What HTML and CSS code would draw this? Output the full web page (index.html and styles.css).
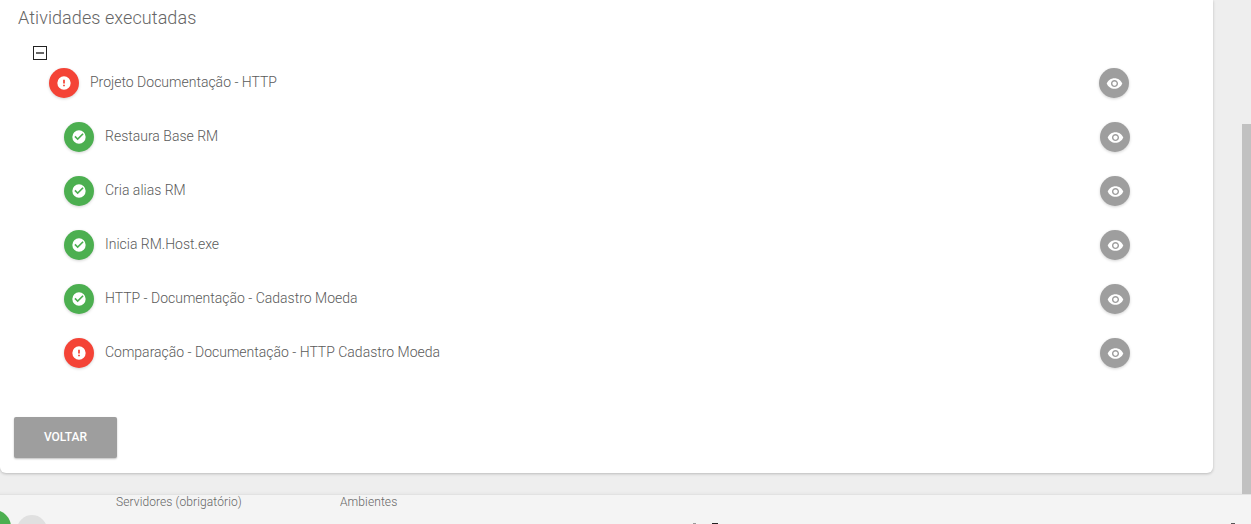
FILE: index.html
```html
<!DOCTYPE html>
<html lang="pt">
<head>
<meta charset="utf-8">
<title>Atividades executadas</title>
<link rel="stylesheet" href="styles.css">
</head>
<body>
<svg class="defs" width="0" height="0" aria-hidden="true">
  <symbol id="i-eye" viewBox="0 0 24 24"><path d="M12 4.5C7 4.5 2.7 7.6 1 12c1.7 4.4 6 7.5 11 7.5s9.3-3.1 11-7.5c-1.7-4.4-6-7.5-11-7.5zM12 17c-2.8 0-5-2.2-5-5s2.2-5 5-5 5 2.2 5 5-2.2 5-5 5zm0-8c-1.7 0-3 1.3-3 3s1.3 3 3 3 3-1.3 3-3-1.3-3-3-3z"/></symbol>
  <symbol id="i-check" viewBox="0 0 24 24"><path fill-rule="evenodd" d="M12 2a10 10 0 1 0 0 20 10 10 0 0 0 0-20zm-2 15-5-5 1.8-1.8 3.2 3.2 7.2-7.2L19 8l-9 9z"/></symbol>
  <symbol id="i-alert" viewBox="0 0 24 24"><path fill-rule="evenodd" d="M12 2a10 10 0 1 0 0 20 10 10 0 0 0 0-20zm1.3 15h-2.6v-2.4h2.6V17zm0-4.4h-2.6V7h2.6v5.6z"/></symbol>
</svg>
<div class="viewport">
  <main class="card">
    <h1 class="title">Atividades executadas</h1>
    <div class="tree">
      <span class="toggle"><span class="toggle-bar"></span></span>
      <div class="row row-root">
        <span class="status status-error"><svg><use href="#i-alert"/></svg></span>
        <span class="label">Projeto Documentação - HTTP</span>
        <span class="view"><svg><use href="#i-eye"/></svg></span>
      </div>
      <div class="row row-child">
        <span class="status status-ok"><svg><use href="#i-check"/></svg></span>
        <span class="label">Restaura Base RM</span>
        <span class="view"><svg><use href="#i-eye"/></svg></span>
      </div>
      <div class="row row-child">
        <span class="status status-ok"><svg><use href="#i-check"/></svg></span>
        <span class="label">Cria alias RM</span>
        <span class="view"><svg><use href="#i-eye"/></svg></span>
      </div>
      <div class="row row-child">
        <span class="status status-ok"><svg><use href="#i-check"/></svg></span>
        <span class="label">Inicia RM.Host.exe</span>
        <span class="view"><svg><use href="#i-eye"/></svg></span>
      </div>
      <div class="row row-child">
        <span class="status status-ok"><svg><use href="#i-check"/></svg></span>
        <span class="label">HTTP - Documentação - Cadastro Moeda</span>
        <span class="view"><svg><use href="#i-eye"/></svg></span>
      </div>
      <div class="row row-child">
        <span class="status status-error"><svg><use href="#i-alert"/></svg></span>
        <span class="label">Comparação - Documentação - HTTP Cadastro Moeda</span>
        <span class="view"><svg><use href="#i-eye"/></svg></span>
      </div>
    </div>
    <button class="back" type="button">VOLTAR</button>
  </main>
  <div class="scrollbar"><div class="thumb"></div></div>
</div>
<footer class="bottom">
  <div class="fields">
    <span class="field field-servers">Servidores (obrigatório)</span>
    <span class="field">Ambientes</span>
  </div>
  <div class="chips">
    <span class="chip chip-green"></span>
    <span class="chip chip-grey"></span>
    <span class="mark mark-a"></span>
    <span class="mark mark-b"></span>
    <span class="mark mark-c"></span>
  </div>
</footer>
</body>
</html>
```
FILE: styles.css
```css
* { box-sizing: border-box; }
html, body { margin: 0; height: 524px; overflow: hidden; }
body {
  display: flex;
  flex-direction: column;
  background: #eeeeee;
  font-family: Roboto, "Liberation Sans", sans-serif;
  color: #555;
}
.defs { display: block; height: 0; }
.viewport {
  height: 495px;
  display: flex;
  border-bottom: 1px solid #e2e2e2;
  box-shadow: inset 0 -4px 4px -4px rgba(0,0,0,.05);
}
.card {
  width: 1213px;
  height: 473px;
  background: #fff;
  border-radius: 0 0 6px 6px;
  box-shadow: 0 1px 3px rgba(0,0,0,.22);
  padding: 7px 0 0 0;
}
.title {
  margin: 0 0 0 18px;
  font-size: 18px;
  line-height: 22px;
  font-weight: 300;
  color: #666;
  letter-spacing: .08px;
}
.tree { margin-top: 17px; padding-left: 33px; }
.toggle {
  display: flex;
  align-items: center;
  justify-content: center;
  width: 14px;
  height: 14px;
  border: 1.5px solid #222;
}
.toggle-bar { width: 8px; height: 2px; background: #666; }
.row {
  height: 54px;
  display: flex;
  align-items: center;
}
.row-root { margin: 1px 0 0 16px; width: 1080px; height: 44px; }
.row-root + .row { margin-top: 5px; }
.row-child { margin-left: 31px; width: 1066px; }
.status {
  flex: none;
  width: 30px;
  height: 30px;
  border-radius: 50%;
  display: flex;
  align-items: center;
  justify-content: center;
  box-shadow: 0 1px 3px rgba(0,0,0,.18);
}
.status svg { width: 16px; height: 16px; fill: #fff; }
.status-error { background: #f44336; }
.status-ok { background: #4caf50; }
.label {
  flex: 1;
  margin-left: 11px;
  font-size: 14px;
  font-weight: 300;
  line-height: 18px;
  color: #5a5a5a;
  position: relative;
  top: -1px;
}
.view {
  flex: none;
  width: 30px;
  height: 30px;
  border-radius: 50%;
  background: #9e9e9e;
  display: flex;
  align-items: center;
  justify-content: center;
  box-shadow: 0 1px 3px rgba(0,0,0,.18);
}
.view svg { width: 17px; height: 17px; fill: #fff; }
.back {
  display: block;
  margin: 37px 0 0 14px;
  width: 103px;
  height: 41px;
  border: 0;
  border-radius: 2px;
  background: #9e9e9e;
  color: #fff;
  font-family: inherit;
  font-size: 12px;
  font-weight: 500;
  box-shadow: 0 1px 2px rgba(0,0,0,.25);
  padding: 0 0 2px;
}
.scrollbar {
  margin-left: 29px;
  width: 9px;
  height: 100%;
  background: #eeeeee;
  padding-top: 124px;
}
.thumb { height: 100%; background: #c1c1c1; }
.bottom {
  flex: 1;
  background: #f4f4f4;
  overflow: hidden;
}
.fields {
  display: flex;
  padding-left: 116px;
  height: 14px;
  font-size: 12px;
  font-weight: 300;
  line-height: 14px;
  color: #666;
  letter-spacing: .1px;
}
.field-servers { width: 224px; }
.chips {
  display: flex;
  align-items: flex-start;
  gap: 6px;
  margin: 6px 0 0 -23px;
}
.chip { width: 30px; height: 30px; border-radius: 50%; flex: none; }
.chip-green { width: 34px; height: 34px; margin-top: -5px; background: #4caf50; }
.chip-grey { background: #e0e0e0; }
.mark { flex: none; height: 1px; margin-top: 8px; }
.mark-a { width: 3px; margin-left: 640px; background: #999; }
.mark-b { width: 6px; margin-left: 10px; background: #222; }
.mark-c { width: 4px; margin-left: 507px; background: #555; }
```
